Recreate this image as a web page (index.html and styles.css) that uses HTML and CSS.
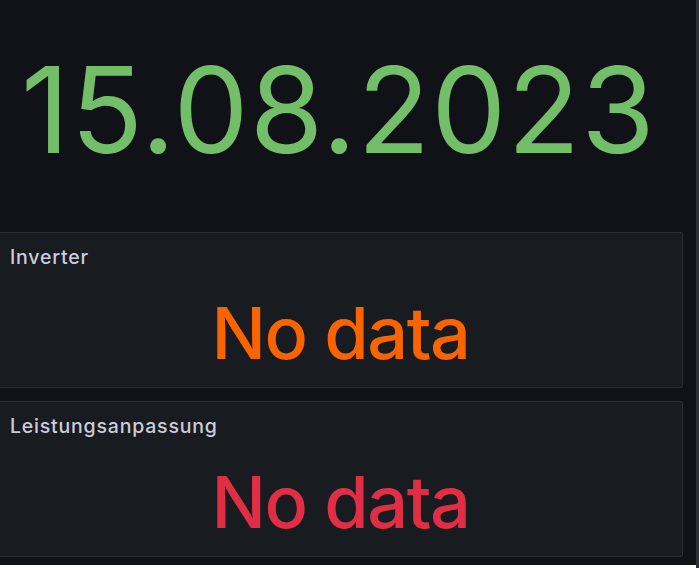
FILE: index.html
```html
<!DOCTYPE html>
<html lang="de">
<head>
    <meta charset="UTF-8">
    <meta name="viewport" content="width=device-width, initial-scale=1.0">
    <title>Dashboard</title>
    <link rel="stylesheet" href="styles.css">
</head>
<body>
    <div class="screen">
        <div class="main">
            <div class="dashboard">
                <div class="stat stat-date">
                    <span class="date-value">15.08.2023</span>
                </div>
                <div class="panel">
                    <div class="panel-title">Inverter</div>
                    <div class="panel-body">
                        <span class="no-data orange">No data</span>
                    </div>
                </div>
                <div class="panel">
                    <div class="panel-title">Leistungsanpassung</div>
                    <div class="panel-body">
                        <span class="no-data red">No data</span>
                    </div>
                </div>
            </div>
            <div class="bottom-strip"></div>
        </div>
        <div class="scroll-edge"></div>
    </div>
</body>
</html>
```
FILE: styles.css
```css
html, body {
    margin: 0;
    padding: 0;
    height: 100%;
    overflow: hidden;
}
* { box-sizing: border-box; }
body {
    font-family: 'Inter', 'Roboto', sans-serif;
    background: #111217;
    color: #ccccdc;
}
.screen {
    display: flex;
    height: 568px;
}
.main {
    flex: 1;
    display: flex;
    flex-direction: column;
}
.dashboard {
    flex: 1;
    display: flex;
    flex-direction: column;
    gap: 13px;
    margin-left: -2px;
    margin-right: 13px;
    overflow: hidden;
}
.bottom-strip {
    height: 3px;
    background: #ffffff;
}
.scroll-edge {
    width: 3px;
    background: #2f3036;
}
.stat-date {
    height: 219px;
    flex-shrink: 0;
    display: flex;
    align-items: center;
    justify-content: center;
    padding-top: 2px;
    padding-right: 4px;
}
.date-value {
    font-size: 119px;
    line-height: 1;
    color: #73bf69;
    font-weight: 400;
    letter-spacing: 1.2px;
}
.panel {
    height: 156px;
    flex-shrink: 0;
    background: #181b1f;
    border: 1px solid #2c2e34;
    border-radius: 2px;
    display: flex;
    flex-direction: column;
}
.panel-title {
    padding: 12px 0 0 11px;
    font-size: 19.5px;
    font-weight: 500;
    line-height: 24px;
    letter-spacing: 0.8px;
}
.panel-body {
    flex: 1;
    display: flex;
    align-items: center;
    justify-content: center;
    padding-top: 10px;
}
.no-data {
    font-size: 72px;
    line-height: 1;
    font-weight: 500;
    letter-spacing: -1.5px;
}
.orange { color: #fa6400; }
.red { color: #e02f44; }
```
